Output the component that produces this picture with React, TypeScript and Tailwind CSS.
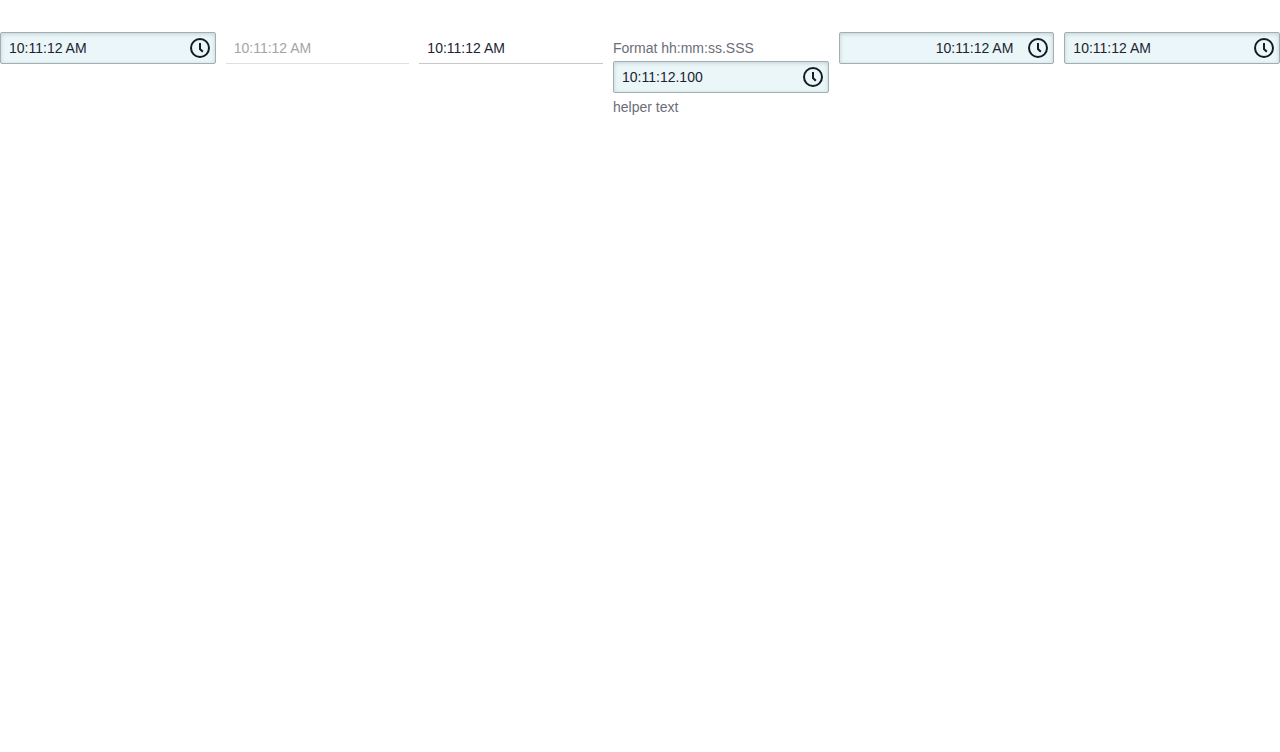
type FieldProps = {
  id: string;
  name: string;
  value: string;
  align?: "left" | "right";
  label?: string;
  helper?: string;
};

function ClockIcon() {
  return (
    <svg viewBox="0 0 24 24" className="size-6" fill="none" stroke="currentColor" strokeWidth="2" aria-hidden="true">
      <circle cx="12" cy="12" r="9" />
      <path d="M12 7v6l2.8 2.8" />
    </svg>
  );
}

function TimeField({ id, name, value, align = "left", label, helper }: FieldProps) {
  return (
    <div className="min-w-0 grow basis-13">
      {label && (
        <label htmlFor={id} className="block h-[29px] pt-[6px] text-sm text-[#6a6e79]">
          {label}
        </label>
      )}
      <div className="flex h-8 items-center rounded-[2px] border border-[#a0afb5] bg-[#eaf6f8] pr-[3px] shadow-[inset_0_1px_4px_rgba(0,0,0,0.16)]">
        <input
          id={id}
          type="text"
          aria-label={label ? undefined : name}
          defaultValue={value}
          className={
            align === "right"
              ? "h-full w-0 min-w-0 grow bg-transparent pr-[13px] pl-2 text-right outline-none"
              : "h-full w-0 min-w-0 grow bg-transparent px-2 outline-none"
          }
        />
        <button type="button" aria-label="Pick a time" className="shrink-0 text-[#131c24]">
          <ClockIcon />
        </button>
      </div>
      {helper && <p className="pt-1 text-sm text-[#6a6e79]">{helper}</p>}
    </div>
  );
}

function PlainField({ name, value, disabled = false }: { name: string; value: string; disabled?: boolean }) {
  return (
    <input
      type="text"
      aria-label={name}
      defaultValue={value}
      readOnly
      disabled={disabled}
      className={
        disabled
          ? "h-8 min-w-0 grow basis-5 border-b border-[#dfdfdf] px-2 text-[#a4a4a6] outline-none"
          : "h-8 min-w-0 grow basis-5 border-b border-[#c8c8c8] px-2 outline-none"
      }
    />
  );
}

export default function App() {
  return (
    <main className="flex items-start gap-[10px] pt-8 font-['Liberation_Sans',Arial,sans-serif] text-sm text-[#1c2430]">
      <TimeField id="time" name="Time" value="10:11:12 AM" />
      <PlainField name="Disabled time" value="10:11:12 AM" disabled />
      <PlainField name="Read-only time" value="10:11:12 AM" />
      <TimeField
        id="time-ms"
        name="Time with milliseconds"
        value="10:11:12.100"
        label="Format hh:mm:ss.SSS"
        helper="helper text"
      />
      <TimeField id="time-right" name="Right-aligned time" value="10:11:12 AM" align="right" />
      <TimeField id="time-last" name="Other time" value="10:11:12 AM" />
    </main>
  );
}
